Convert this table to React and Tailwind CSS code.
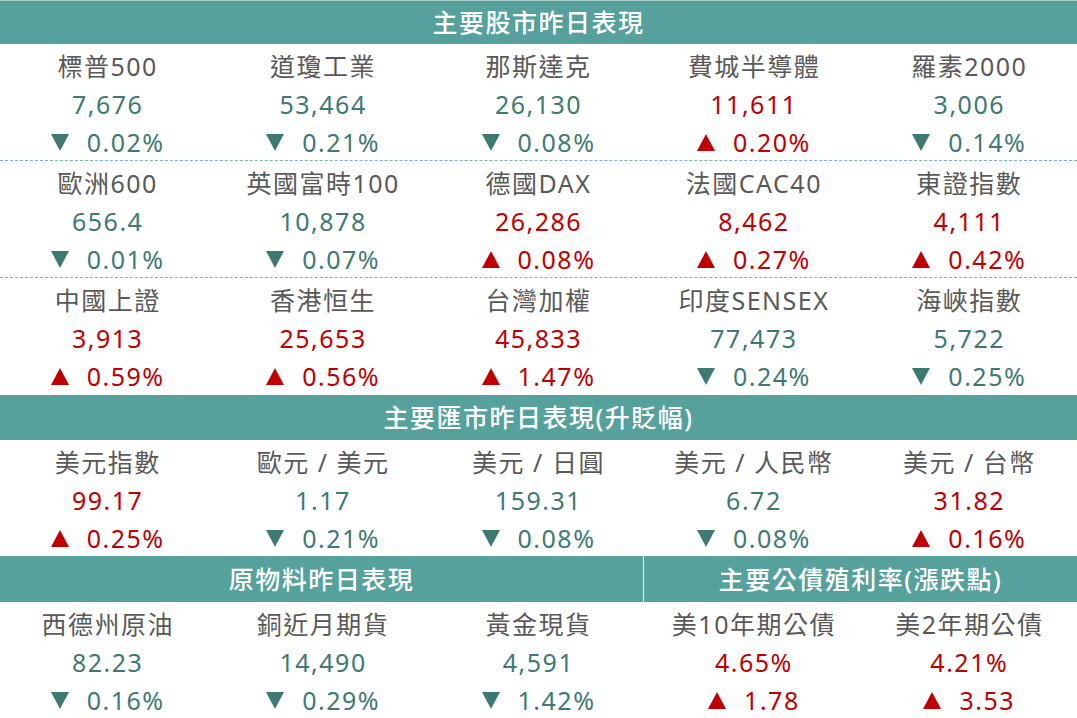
import React from "react";

const GREEN = "text-[#3e7a72]";
const RED = "text-[#c00000]";

const stocks = [
  [
    { name: "標普500", value: "7,676", change: "0.02%", up: false },
    { name: "道瓊工業", value: "53,464", change: "0.21%", up: false },
    { name: "那斯達克", value: "26,130", change: "0.08%", up: false },
    { name: "費城半導體", value: "11,611", change: "0.20%", up: true },
    { name: "羅素2000", value: "3,006", change: "0.14%", up: false },
  ],
  [
    { name: "歐洲600", value: "656.4", change: "0.01%", up: false },
    { name: "英國富時100", value: "10,878", change: "0.07%", up: false },
    { name: "德國DAX", value: "26,286", change: "0.08%", up: true },
    { name: "法國CAC40", value: "8,462", change: "0.27%", up: true },
    { name: "東證指數", value: "4,111", change: "0.42%", up: true },
  ],
  [
    { name: "中國上證", value: "3,913", change: "0.59%", up: true },
    { name: "香港恒生", value: "25,653", change: "0.56%", up: true },
    { name: "台灣加權", value: "45,833", change: "1.47%", up: true },
    { name: "印度SENSEX", value: "77,473", change: "0.24%", up: false },
    { name: "海峽指數", value: "5,722", change: "0.25%", up: false },
  ],
];

const fx = [
  { name: "美元指數", value: "99.17", change: "0.25%", up: true },
  { name: "歐元 / 美元", value: "1.17", change: "0.21%", up: false },
  { name: "美元 / 日圓", value: "159.31", change: "0.08%", up: false },
  { name: "美元 / 人民幣", value: "6.72", change: "0.08%", up: false },
  { name: "美元 / 台幣", value: "31.82", change: "0.16%", up: true },
];

const commodities = [
  { name: "西德州原油", value: "82.23", change: "0.16%", up: false },
  { name: "銅近月期貨", value: "14,490", change: "0.29%", up: false },
  { name: "黃金現貨", value: "4,591", change: "1.42%", up: false },
  { name: "美10年期公債", value: "4.65%", change: "1.78", up: true },
  { name: "美2年期公債", value: "4.21%", change: "3.53", up: true },
];

function Triangle({ up }) {
  return (
    <svg width="18" height="17" viewBox="0 0 18 17" className="shrink-0">
      <polygon points={up ? "9,0 18,17 0,17" : "0,0 18,0 9,17"} fill="currentColor" />
    </svg>
  );
}

function Cell({ item }) {
  const tone = item.up ? RED : GREEN;
  return (
    <div className="flex flex-col items-center">
      <div className="flex h-[38px] items-center text-[#595959]">{item.name}</div>
      <div className={`flex h-[38px] items-center ${tone}`}>{item.value}</div>
      <div className={`flex h-[38px] items-center gap-[18px] ${tone}`}>
        <Triangle up={item.up} />
        <span>{item.change}</span>
      </div>
    </div>
  );
}

function Row({ items, dashed, className = "h-[116px]" }) {
  return (
    <div
      className={`grid grid-cols-5 pt-[3px] ${className} ${
        dashed ? "border-b border-dashed border-[#74b6af]" : ""
      }`}
    >
      {items.map((item) => (
        <Cell key={item.name} item={item} />
      ))}
    </div>
  );
}

function Header({ children, className = "" }) {
  return (
    <div
      className={`flex items-center justify-center bg-[#56a19b] font-medium text-white ${className}`}
    >
      {children}
    </div>
  );
}

export default function App() {
  return (
    <div
      className="w-[1077px] h-[718px] overflow-hidden bg-white text-[25px] leading-none tracking-[1.5px]"
      style={{ fontFamily: '"Noto Sans", "Noto Sans CJK TC", sans-serif' }}
    >
      <Header className="h-[44px] border-t border-[#a9d0cc]">主要股市昨日表現</Header>
      <Row items={stocks[0]} dashed className="h-[117px]" />
      <Row items={stocks[1]} dashed className="h-[117px]" />
      <Row items={stocks[2]} className="h-[117px]" />

      <Header className="h-[45px]">主要匯市昨日表現(升貶幅)</Header>
      <Row items={fx} />

      <div className="grid h-[46px] grid-cols-[643px_1px_1fr]">
        <Header>原物料昨日表現</Header>
        <div className="bg-[#e6f1f0]" />
        <Header>主要公債殖利率(漲跌點)</Header>
      </div>
      <Row items={commodities} />
    </div>
  );
}
